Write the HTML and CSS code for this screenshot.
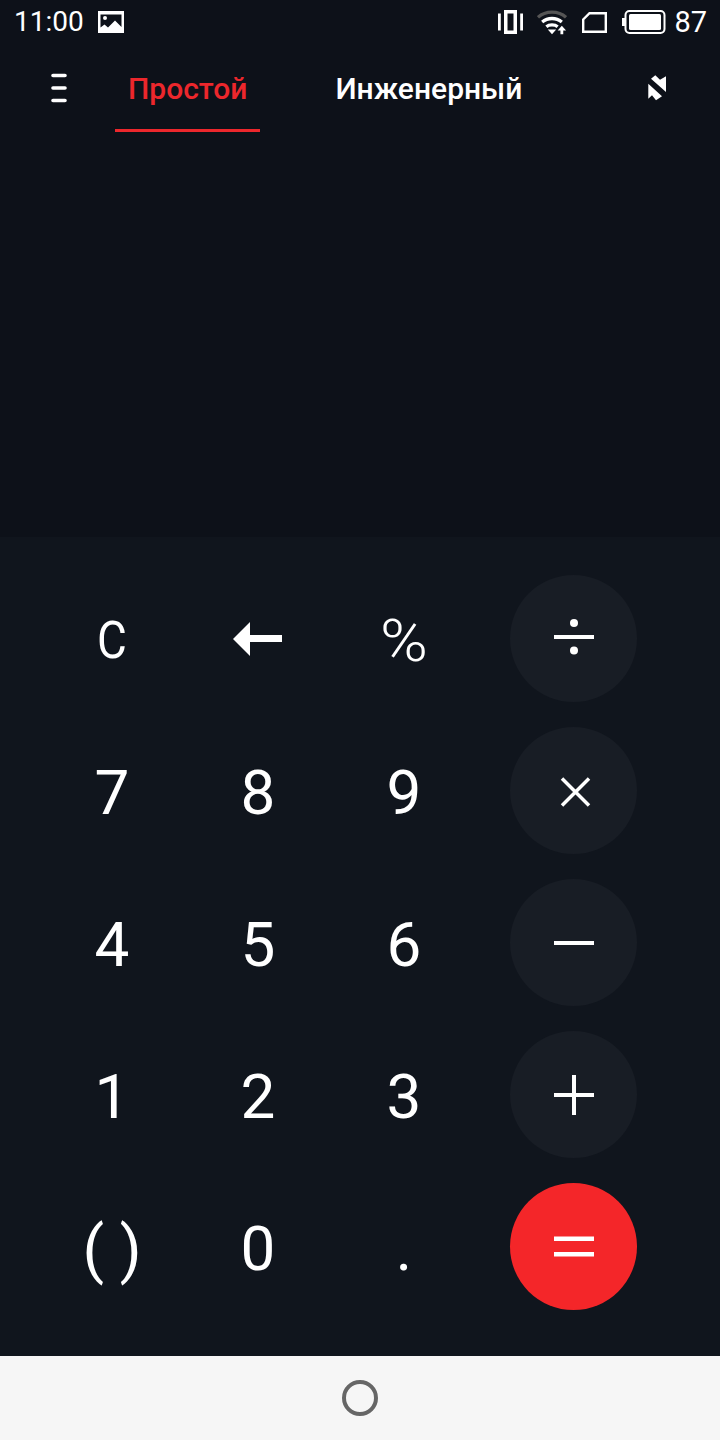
FILE: index.html
```html
<!DOCTYPE html>
<html lang="ru">
<head>
    <meta charset="UTF-8">
    <meta name="viewport" content="width=device-width, initial-scale=1.0">
    <title>Калькулятор</title>
    <link rel="stylesheet" href="styles.css">
</head>
<body>
    <div class="app">
        <div class="status-bar">
            <span class="clock">11:00</span>
            <svg class="icon-picture" viewBox="0 0 26 22"><path fill="#fff" fill-rule="evenodd" d="M0 0h26v22H0zM2.500 3.500v13l4-3 3.500 3 7-7 6.500 6.500V3.500zM7 5a2 2 0 1 1 0 4 2 2 0 0 1 0-4z"/></svg>
            <span class="status-right">
                <svg class="icon-vibrate" viewBox="0 0 25 24"><path fill="#fff" fill-rule="evenodd" d="M6 0h13v24H6zM9.500 3.500v17h6v-17z"/><path fill="#fff" d="M0 3.500h2.800v17H0zM22.200 3.500H25v17h-2.800z"/></svg>
                <svg class="icon-wifi" viewBox="0 0 32 26"><path fill="none" stroke="#555" stroke-width="3.500" d="M1 8c8-7.500 22-7.500 30 0"/><path fill="none" stroke="#fff" stroke-width="3.500" d="M5.500 13c6-5 15-5 21 0M10 18c3-2.500 9-2.500 12 0"/><path fill="#fff" d="M11.500 21h9L16 26zM26.500 17l4.500 5h-3v4h-3v-4h-3z"/></svg>
                <svg class="icon-sim" viewBox="0 0 25 21"><path fill="none" stroke="#fff" stroke-width="2.400" d="M7.500 1.200h16.300v18.600H1.200V7.500z"/></svg>
                <svg class="icon-battery" viewBox="0 0 44 24"><path fill="#fff" d="M0 8h3v8H0z"/><rect x="3.500" y="1" width="39" height="22" rx="4" fill="none" stroke="#fff" stroke-width="2"/><rect x="7" y="4" width="32" height="16" rx="1.500" fill="#fff"/></svg>
                <span class="battery-level">87</span>
            </span>
        </div>

        <div class="tabs">
            <svg class="icon-menu" viewBox="0 0 16 30"><path stroke="#fff" stroke-width="3.600" stroke-linecap="round" d="M2 2.500h12M2 15h12M2 27.500h12"/></svg>
            <div class="tab tab-active">Простой</div>
            <div class="tab">Инженерный</div>
            <svg class="icon-rotate" viewBox="0 0 22 28"><path fill="#fff" d="M1.300 8.700v15L5 20.300l4 5 6-4zM4 3.700L8.300.3 13 4.700l6-3.400V17z"/></svg>
        </div>

        <div class="display"></div>

        <div class="keypad">
            <button class="key key-clear">C</button>
            <button class="key">
                <svg class="icon-back" viewBox="0 0 49 34"><path fill="#fff" d="M17 0v13h32v7H17v14L0 17z"/></svg>
            </button>
            <button class="key key-percent">%</button>
            <button class="key-op">
                <svg viewBox="0 0 40 40"><path fill="#fff" d="M0 16h40v4H0z"/><circle cx="20" cy="4" r="4" fill="#fff"/><circle cx="20" cy="31.500" r="4" fill="#fff"/></svg>
            </button>

            <button class="key">7</button>
            <button class="key">8</button>
            <button class="key">9</button>
            <button class="key-op">
                <svg viewBox="0 0 40 40"><path stroke="#fff" stroke-width="3.500" d="M8 7.500l27 27M35 7.500l-27 27"/></svg>
            </button>

            <button class="key">4</button>
            <button class="key">5</button>
            <button class="key">6</button>
            <button class="key-op">
                <svg viewBox="0 0 40 40"><path fill="#fff" d="M0 18h40v4H0z"/></svg>
            </button>

            <button class="key">1</button>
            <button class="key">2</button>
            <button class="key">3</button>
            <button class="key-op">
                <svg viewBox="0 0 40 40"><path fill="#fff" d="M0 18h40v4H0zM18 0h4v40h-4z"/></svg>
            </button>

            <button class="key key-parens">( )</button>
            <button class="key">0</button>
            <button class="key">.</button>
            <button class="key-op key-equals">
                <svg viewBox="0 0 40 40"><path fill="#fff" d="M0 9.500h40V14H0zM0 25h40v4.500H0z"/></svg>
            </button>
        </div>

        <div class="nav-bar">
            <div class="home-button"></div>
        </div>
    </div>
</body>
</html>
```

FILE: styles.css
```css
html, body {
    margin: 0;
    padding: 0;
}
body {
    font-family: Roboto, "Liberation Sans", sans-serif;
    background-color: #0d1119;
    color: #fff;
}
svg {
    display: block;
}
.app {
    display: flex;
    flex-direction: column;
    width: 720px;
    height: 1440px;
    overflow: hidden;
}
.status-bar {
    display: flex;
    align-items: center;
    height: 44px;
    padding: 0 13px 0 14px;
    font-size: 29px;
    line-height: 44px;
}
.clock {
    width: 84px;
    font-size: 28px;
}
.icon-picture {
    width: 26px;
    height: 22px;
}
.status-right {
    display: flex;
    align-items: center;
    margin-left: auto;
}
.icon-vibrate {
    width: 25px;
    height: 24px;
}
.icon-wifi {
    width: 30px;
    height: 26px;
    margin-left: 14px;
}
.icon-sim {
    width: 25px;
    height: 21px;
    margin-left: 15px;
}
.icon-battery {
    width: 44px;
    height: 24px;
    margin-left: 15px;
}
.battery-level {
    margin-left: 8px;
}
.tabs {
    display: flex;
    align-items: flex-start;
    height: 88px;
    padding-left: 51px;
}
.icon-menu {
    width: 16px;
    height: 30px;
    margin-top: 29px;
}
.tab {
    box-sizing: border-box;
    height: 88px;
    padding: 27px 13px 0;
    font-size: 30px;
    font-weight: 500;
    line-height: 36px;
}
.tab-active {
    margin-left: 48px;
    color: #ec272c;
    border-bottom: 3px solid #ec272c;
}
.tab:not(.tab-active) {
    margin-left: 62px;
}
.icon-rotate {
    width: 22px;
    height: 28px;
    margin-top: 31px;
    margin-left: 112px;
}
.display {
    flex: 1;
}
.keypad {
    display: grid;
    grid-template-columns: 146px 146px 146px 127px;
    grid-auto-rows: 127px;
    row-gap: 25px;
    height: 819px;
    box-sizing: border-box;
    padding: 38px 0 0 39px;
    background-color: #10151d;
}
.key {
    display: flex;
    align-items: center;
    justify-content: center;
    padding: 5px 0 0;
    border: none;
    background: none;
    color: #fff;
    font-family: inherit;
    font-size: 62px;
    line-height: 1;
}
.key-clear {
    font-size: 52px;
    transform: scaleX(0.88);
}
.key-percent {
    font-size: 60px;
    font-weight: 300;
    transform: scaleX(1.08);
}
.key-parens {
    font-size: 63px;
}
.icon-back {
    width: 49px;
    height: 34px;
    margin: -4px 0 0 -2px;
}
.key-op {
    display: flex;
    align-items: center;
    justify-content: center;
    width: 127px;
    height: 127px;
    margin-left: 33px;
    padding: 0;
    border: none;
    border-radius: 50%;
    background-color: #181d25;
}
.key-op svg {
    width: 40px;
    height: 40px;
}
.key-equals {
    background-color: #f42629;
}
.nav-bar {
    display: flex;
    align-items: center;
    justify-content: center;
    height: 84px;
    background-color: #f6f6f6;
}
.home-button {
    box-sizing: border-box;
    width: 36px;
    height: 36px;
    border: 4px solid #666;
    border-radius: 50%;
}
```
